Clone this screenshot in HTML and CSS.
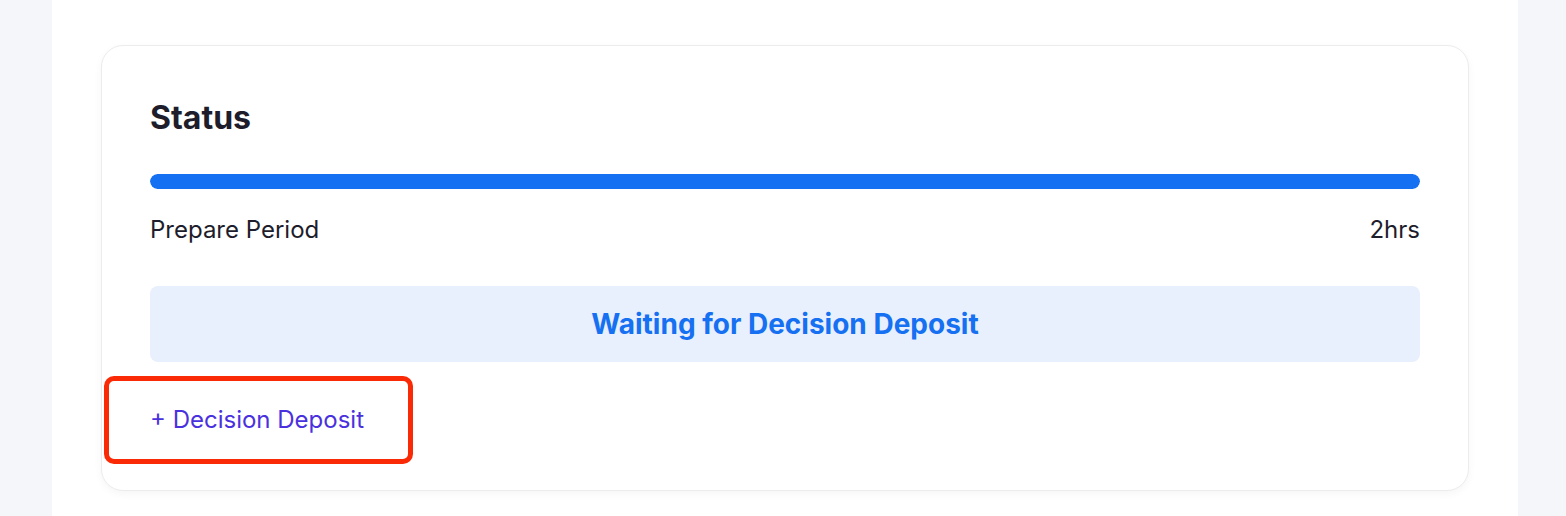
FILE: index.html
```html
<!DOCTYPE html>
<html>
<head>
<meta charset="utf-8">
<link rel="stylesheet" href="styles.css">
</head>
<body>
<div class="page">
  <div class="panel">
    <div class="card">
      <h2 class="title">Status</h2>
      <div class="bar"><div class="bar-fill" style="width:100%"></div></div>
      <div class="period">
        <span>Prepare Period</span>
        <span>2hrs</span>
      </div>
      <div class="waiting">Waiting for Decision Deposit</div>
      <div class="action">
        <button class="deposit-btn">+ Decision Deposit</button>
        <div class="highlight"></div>
      </div>
    </div>
  </div>
</div>
</body>
</html>
```

FILE: styles.css
```css
* { box-sizing: border-box; }
html, body {
  margin: 0;
  padding: 0;
  background: #f5f6fa;
  font-family: Inter, "Noto Sans", sans-serif;
  color: #1d1d2c;
}
.page {
  height: 516px;
  padding: 0 48px 0 52px;
  overflow: hidden;
}
.panel {
  background: #ffffff;
  height: 516px;
  padding: 45px 49px 0 49px;
}
.card {
  border: 1px solid #ececef;
  border-radius: 22px;
  box-shadow: 0 3px 8px rgba(20, 20, 40, 0.04);
  padding: 48px 48px 56px 48px;
  background: #fff;
}
.title {
  margin: 0;
  font-size: 32px;
  font-weight: 700;
  line-height: 48px;
  color: #1d1d2c;
}
.bar {
  margin-top: 32px;
  height: 15px;
  border-radius: 8px;
  background: #e6ecf5;
  overflow: hidden;
}
.bar-fill {
  height: 100%;
  background: #1570f2;
  border-radius: 8px;
}
.period {
  display: flex;
  justify-content: space-between;
  margin-top: 27px;
  font-size: 24px;
  line-height: 28px;
  color: #1d1d2c;
}
.waiting {
  margin-top: 42px;
  height: 76px;
  background: #e8effd;
  border-radius: 8px;
  display: flex;
  align-items: center;
  justify-content: center;
  font-size: 28px;
  font-weight: 700;
  color: #1570f2;
}
.action {
  position: relative;
  margin-top: 44px;
}
.deposit-btn {
  display: block;
  border: 0;
  background: transparent;
  padding: 0;
  font-family: inherit;
  font-size: 24px;
  line-height: 28px;
  color: #4a31de;
  cursor: pointer;
}
.highlight {
  position: absolute;
  left: -46px;
  top: -30px;
  width: 309px;
  height: 88px;
  border: 5px solid #fb2a06;
  border-radius: 10px;
}
```
